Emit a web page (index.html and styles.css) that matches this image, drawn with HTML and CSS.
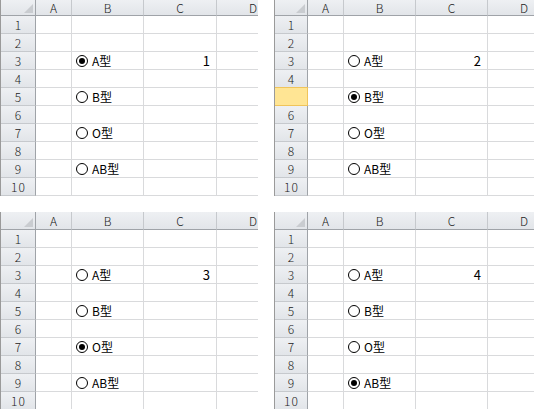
FILE: index.html
```html
<!DOCTYPE html>
<html lang="ja">
<head>
<meta charset="utf-8">
<link rel="stylesheet" href="styles.css">
</head>
<body>
<div class="board">
  <div class="sheet sheet-top">
    <div class="ch corner"><span class="tri"></span></div><div class="ch">A</div><div class="ch">B</div><div class="ch">C</div><div class="ch last">D</div>
    <div class="rh">1</div><div class="c"></div><div class="c"></div><div class="c"></div><div class="c"></div>
    <div class="rh">2</div><div class="c"></div><div class="c"></div><div class="c"></div><div class="c"></div>
    <div class="rh">3</div><div class="c"></div><div class="c opt"><span class="radio on"></span><span class="lbl">A型</span></div><div class="c num">1</div><div class="c"></div>
    <div class="rh">4</div><div class="c"></div><div class="c"></div><div class="c"></div><div class="c"></div>
    <div class="rh">5</div><div class="c"></div><div class="c opt"><span class="radio"></span><span class="lbl">B型</span></div><div class="c"></div><div class="c"></div>
    <div class="rh">6</div><div class="c"></div><div class="c"></div><div class="c"></div><div class="c"></div>
    <div class="rh">7</div><div class="c"></div><div class="c opt"><span class="radio"></span><span class="lbl">O型</span></div><div class="c"></div><div class="c"></div>
    <div class="rh">8</div><div class="c"></div><div class="c"></div><div class="c"></div><div class="c"></div>
    <div class="rh">9</div><div class="c"></div><div class="c opt"><span class="radio"></span><span class="lbl">AB型</span></div><div class="c"></div><div class="c"></div>
    <div class="rh">10</div><div class="c"></div><div class="c"></div><div class="c"></div><div class="c"></div>
  </div>

  <div class="sheet sheet-top sheet-right">
    <div class="ch corner"><span class="tri"></span></div><div class="ch">A</div><div class="ch">B</div><div class="ch">C</div><div class="ch last">D</div>
    <div class="rh">1</div><div class="c"></div><div class="c"></div><div class="c"></div><div class="c"></div>
    <div class="rh">2</div><div class="c"></div><div class="c"></div><div class="c"></div><div class="c"></div>
    <div class="rh">3</div><div class="c"></div><div class="c opt"><span class="radio"></span><span class="lbl">A型</span></div><div class="c num">2</div><div class="c"></div>
    <div class="rh">4</div><div class="c"></div><div class="c"></div><div class="c"></div><div class="c"></div>
    <div class="rh sel"></div><div class="c"></div><div class="c opt"><span class="radio on"></span><span class="lbl">B型</span></div><div class="c"></div><div class="c"></div>
    <div class="rh">6</div><div class="c"></div><div class="c"></div><div class="c"></div><div class="c"></div>
    <div class="rh">7</div><div class="c"></div><div class="c opt"><span class="radio"></span><span class="lbl">O型</span></div><div class="c"></div><div class="c"></div>
    <div class="rh">8</div><div class="c"></div><div class="c"></div><div class="c"></div><div class="c"></div>
    <div class="rh">9</div><div class="c"></div><div class="c opt"><span class="radio"></span><span class="lbl">AB型</span></div><div class="c"></div><div class="c"></div>
    <div class="rh">10</div><div class="c"></div><div class="c"></div><div class="c"></div><div class="c"></div>
  </div>

  <div class="sheet">
    <div class="ch corner"><span class="tri"></span></div><div class="ch">A</div><div class="ch">B</div><div class="ch">C</div><div class="ch last">D</div>
    <div class="rh">1</div><div class="c"></div><div class="c"></div><div class="c"></div><div class="c"></div>
    <div class="rh">2</div><div class="c"></div><div class="c"></div><div class="c"></div><div class="c"></div>
    <div class="rh">3</div><div class="c"></div><div class="c opt"><span class="radio"></span><span class="lbl">A型</span></div><div class="c num">3</div><div class="c"></div>
    <div class="rh">4</div><div class="c"></div><div class="c"></div><div class="c"></div><div class="c"></div>
    <div class="rh">5</div><div class="c"></div><div class="c opt"><span class="radio"></span><span class="lbl">B型</span></div><div class="c"></div><div class="c"></div>
    <div class="rh">6</div><div class="c"></div><div class="c"></div><div class="c"></div><div class="c"></div>
    <div class="rh">7</div><div class="c"></div><div class="c opt"><span class="radio on"></span><span class="lbl">O型</span></div><div class="c"></div><div class="c"></div>
    <div class="rh">8</div><div class="c"></div><div class="c"></div><div class="c"></div><div class="c"></div>
    <div class="rh">9</div><div class="c"></div><div class="c opt"><span class="radio"></span><span class="lbl">AB型</span></div><div class="c"></div><div class="c"></div>
    <div class="rh">10</div><div class="c"></div><div class="c"></div><div class="c"></div><div class="c"></div>
  </div>

  <div class="sheet sheet-right">
    <div class="ch corner"><span class="tri"></span></div><div class="ch">A</div><div class="ch">B</div><div class="ch">C</div><div class="ch last">D</div>
    <div class="rh">1</div><div class="c"></div><div class="c"></div><div class="c"></div><div class="c"></div>
    <div class="rh">2</div><div class="c"></div><div class="c"></div><div class="c"></div><div class="c"></div>
    <div class="rh">3</div><div class="c"></div><div class="c opt"><span class="radio"></span><span class="lbl">A型</span></div><div class="c num">4</div><div class="c"></div>
    <div class="rh">4</div><div class="c"></div><div class="c"></div><div class="c"></div><div class="c"></div>
    <div class="rh">5</div><div class="c"></div><div class="c opt"><span class="radio"></span><span class="lbl">B型</span></div><div class="c"></div><div class="c"></div>
    <div class="rh">6</div><div class="c"></div><div class="c"></div><div class="c"></div><div class="c"></div>
    <div class="rh">7</div><div class="c"></div><div class="c opt"><span class="radio"></span><span class="lbl">O型</span></div><div class="c"></div><div class="c"></div>
    <div class="rh">8</div><div class="c"></div><div class="c"></div><div class="c"></div><div class="c"></div>
    <div class="rh">9</div><div class="c"></div><div class="c opt"><span class="radio on"></span><span class="lbl">AB型</span></div><div class="c"></div><div class="c"></div>
    <div class="rh">10</div><div class="c"></div><div class="c"></div><div class="c"></div><div class="c"></div>
  </div>
</div>
</body>
</html>
```
FILE: styles.css
```css
html, body {
  margin: 0;
  padding: 0;
  background: #ffffff;
  overflow: hidden;
}
body {
  width: 534px;
  height: 409px;
  font-family: "Noto Sans CJK JP", "DejaVu Sans", sans-serif;
  font-size: 12px;
  color: #000;
}
.board {
  display: grid;
  grid-template-columns: 258px 260px;
  column-gap: 16px;
  row-gap: 16px;
}
.sheet {
  display: grid;
  grid-template-columns: 35px 36px 72px 73px 72px;
  grid-template-rows: repeat(11, 18px);
  height: 197px;
  overflow: hidden;
  border-left: 1px solid #9a9a9a;
}
.sheet-top {
  grid-template-rows: 16px repeat(10, 18px);
  height: 196px;
}
.sheet-right {
  grid-template-columns: 33px 36px 72px 72px 72px;
}
.ch, .rh {
  background: linear-gradient(#eef0f3, #e2e5e9);
  color: #222;
  font-weight: 300;
  font-size: 12px;
  display: flex;
  align-items: center;
  justify-content: center;
  line-height: 1;
  box-sizing: border-box;
}
.ch {
  border-right: 1px solid #c6c9cd;
  border-bottom: 1px solid #9fa3a8;
}
.ch.last {
  border-right: 0;
}
.corner {
  justify-content: flex-end;
  align-items: flex-end;
  border-right: 1px solid #9fa3a8;
  padding: 0 2px 2px 0;
}
.tri {
  width: 0;
  height: 0;
  border-left: 9px solid transparent;
  border-bottom: 9px solid #c9ccd0;
}
.rh {
  border-right: 1px solid #9fa3a8;
  border-bottom: 1px solid #c6c9cd;
  letter-spacing: 1px;
  padding-left: 1px;
}
.rh.sel {
  background: #ffe594;
  border-bottom: 1px solid #f0c45a;
  border-top: 1px solid #f0c45a;
  border-right: 1px solid #f0c45a;
  margin-top: -1px;
}
.c {
  border-right: 1px solid #d9dadc;
  border-bottom: 1px solid #d9dadc;
  box-sizing: border-box;
  display: flex;
  align-items: center;
}
.num {
  justify-content: flex-end;
  padding-right: 6px;
  font-size: 13px;
  font-weight: 400;
  color: #000;
  line-height: 1;
}
.opt {
  padding-left: 4px;
  gap: 4px;
}
.radio {
  width: 12px;
  height: 12px;
  border: 1px solid #000;
  border-radius: 50%;
  box-sizing: border-box;
  background: #fff;
  display: flex;
  align-items: center;
  justify-content: center;
  flex: none;
}
.radio.on::after {
  content: "";
  width: 6px;
  height: 6px;
  border-radius: 50%;
  background: #000;
}
.lbl {
  font-size: 12px;
  line-height: 1;
}
```
